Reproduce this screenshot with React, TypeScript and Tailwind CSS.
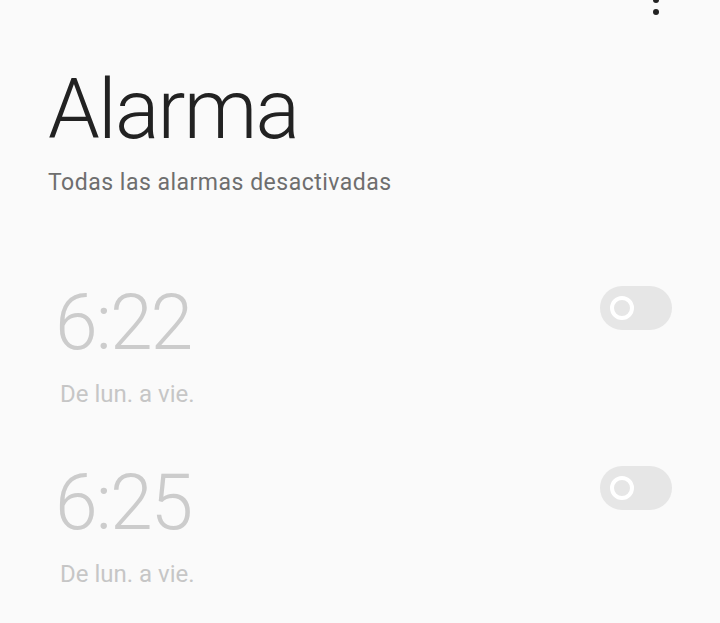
const alarms = [
  { time: '6:22', days: 'De lun. a vie.' },
  { time: '6:25', days: 'De lun. a vie.' },
];

function Toggle() {
  return (
    <div className="w-[72px] h-[44px] rounded-full bg-[#e6e6e6] flex items-center pl-[10px]">
      <div className="w-[24px] h-[24px] rounded-full border-[4px] border-white bg-[#e6e6e6]" />
    </div>
  );
}

export default function App() {
  return (
    <div
      className="h-[623px] w-[720px] overflow-hidden bg-[#fafafa]"
      style={{ fontFamily: 'Roboto, "Noto Sans", sans-serif' }}
    >
      {/* Top bar, overflow menu scrolled partly out of view */}
      <div className="flex justify-end pr-[61px] h-[20px]">
        <div className="flex flex-col items-center gap-[6px] -mt-[15px]">
          <span className="w-[6px] h-[6px] rounded-full bg-[#222]" />
          <span className="w-[6px] h-[6px] rounded-full bg-[#222]" />
          <span className="w-[6px] h-[6px] rounded-full bg-[#222]" />
        </div>
      </div>

      {/* Title */}
      <div className="pl-[48px] mt-[48px]">
        <h1 className="text-[83px] leading-none font-light tracking-[-1.8px] text-[#222]">Alarma</h1>
        <p className="mt-[20px] text-[23px] leading-[24px] tracking-[0.5px] text-[#6e6e6e]">
          Todas las alarmas desactivadas
        </p>
      </div>

      {/* Alarm list */}
      <div className="mt-[90px] flex flex-col">
        {alarms.map((a) => (
          <div key={a.time} className="flex justify-between pl-[55px] pr-[48px] h-[180px]">
            <div className="flex flex-col">
              <span className="text-[77px] leading-none font-light tracking-[-2px] text-[#cccccc]">
                {a.time}
              </span>
              <span className="mt-[20px] pl-[5px] text-[24px] leading-[24px] text-[#c6c6c6]">
                {a.days}
              </span>
            </div>
            <div className="pt-[1px]">
              <Toggle />
            </div>
          </div>
        ))}
      </div>
    </div>
  );
}
